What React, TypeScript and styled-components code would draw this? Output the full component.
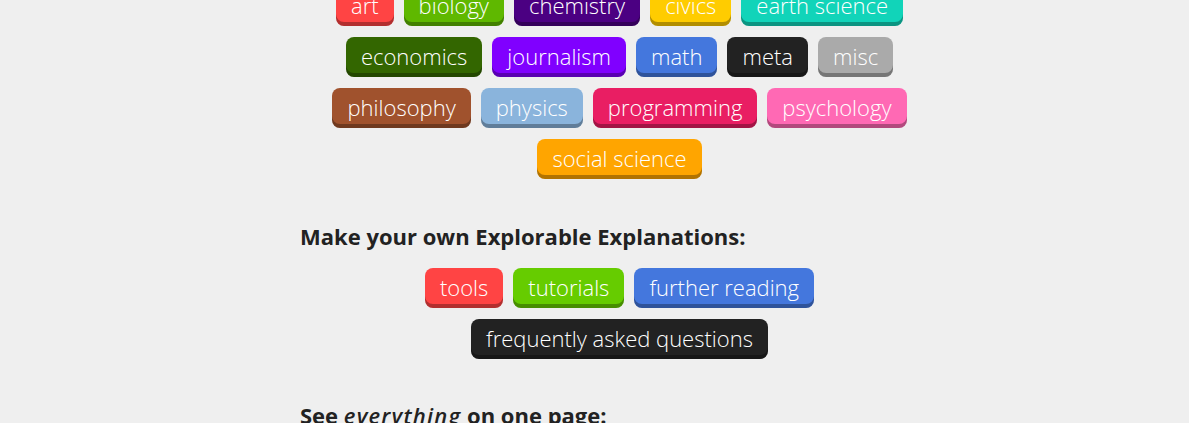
import React from "react";
import styled, { createGlobalStyle } from "styled-components";

const Global = createGlobalStyle`
  html, body { margin: 0; padding: 0; background: #efefef; }
  body { font-family: "Open Sans", "Noto Sans", sans-serif; color: #222; overflow: hidden; }
`;

const Page = styled.div`
  width: 640px;
  margin-left: 300px;
  margin-top: -14px;
`;

const TagCloud = styled.div`
  display: flex;
  flex-wrap: wrap;
  justify-content: center;
  column-gap: 10px;
  row-gap: 11px;
  padding-right: 1px;
`;

const Tag = styled.a<{ $bg: string }>`
  display: inline-block;
  height: 40px;
  box-sizing: border-box;
  padding: 0 15px 4px;
  border-radius: 8px;
  background: ${(p) => p.$bg};
  box-shadow: inset 0 -4px 0 rgba(0, 0, 0, 0.3);
  color: #fff;
  font-family: "Open Sans", sans-serif;
  font-weight: 300;
  font-size: 22px;
  line-height: 38px;
  text-decoration: none;
  white-space: nowrap;
`;

const Heading = styled.h2`
  margin: 0;
  font-family: "Open Sans", sans-serif;
  font-weight: 700;
  font-size: 22px;
  line-height: 30px;
  color: #222;
`;

const Emph = styled.em`
  font-weight: 600;
  letter-spacing: 1.2px;
`;

const Section = styled.div<{ $top: number }>`
  margin-top: ${(p) => p.$top}px;
  display: flex;
  flex-direction: column;
  gap: 17px;
`;

const topics: [string, string][] = [
  ["art", "#ff4444"],
  ["biology", "#5fb800"],
  ["chemistry", "#4b0082"],
  ["civics", "#ffcc00"],
  ["earth science", "#11d4b9"],
  ["economics", "#336600"],
  ["journalism", "#8000ff"],
  ["math", "#4477dd"],
  ["meta", "#222222"],
  ["misc", "#aaaaaa"],
  ["philosophy", "#a0522d"],
  ["physics", "#8ab4dc"],
  ["programming", "#e91e63"],
  ["psychology", "#ff69b4"],
  ["social science", "#ffa500"],
];

const make: [string, string][] = [
  ["tools", "#ff4444"],
  ["tutorials", "#66cc00"],
  ["further reading", "#4477dd"],
  ["frequently asked questions", "#222222"],
];

export default function App() {
  return (
    <>
      <Global />
      <Page>
        <TagCloud>
          {topics.map(([t, c]) => (
            <Tag key={t} $bg={c} href="#">
              {t}
            </Tag>
          ))}
        </TagCloud>
        <Section $top={42}>
          <Heading>Make your own Explorable Explanations:</Heading>
          <TagCloud>
            {make.map(([t, c]) => (
              <Tag key={t} $bg={c} href="#">
                {t}
              </Tag>
            ))}
          </TagCloud>
        </Section>
        <Section $top={41}>
          <Heading>
            See <Emph>everything</Emph> on one page:
          </Heading>
        </Section>
      </Page>
    </>
  );
}
